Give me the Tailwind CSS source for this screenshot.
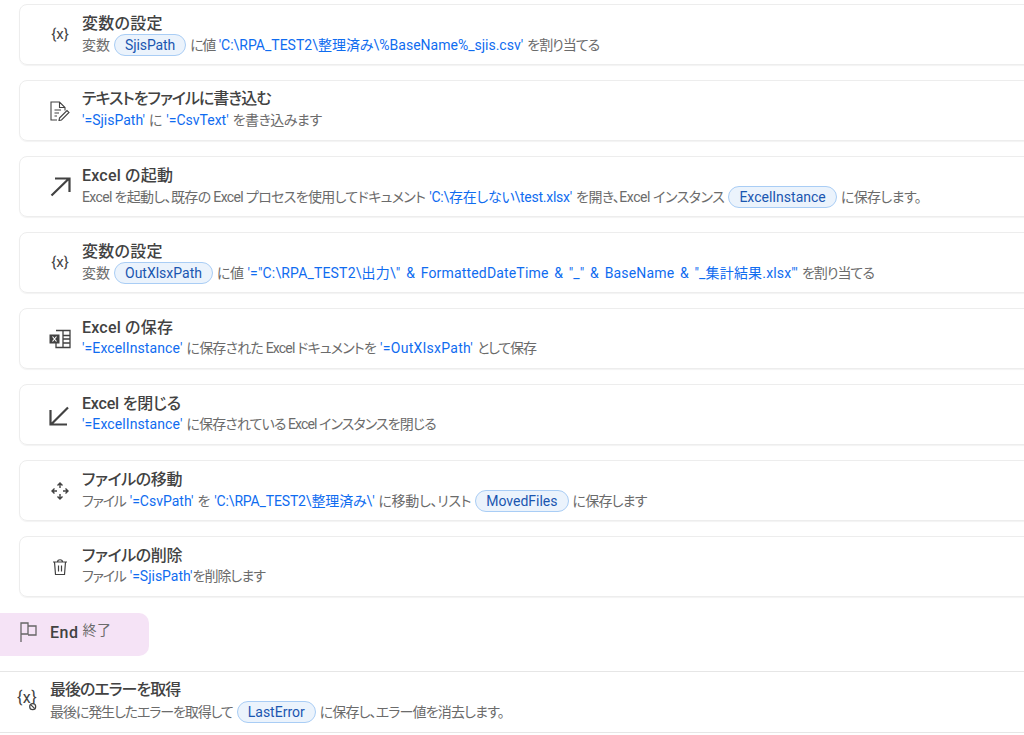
<!DOCTYPE html>
<html lang="ja">
<head>
  <meta charset="UTF-8" />
  <title>Flow</title>
  <script src="https://cdn.jsdelivr.net/npm/@tailwindcss/browser@4"></script>
</head>
<body class="bg-white w-[1024px] h-[735px] overflow-hidden font-['Roboto','Noto_Sans_CJK_JP',sans-serif] [font-feature-settings:'palt'] text-[14px] text-[#6b6b6b]">
  <div class="pt-[4px] pl-[19px] flex flex-col gap-[15px] -mr-[20px]">

    <div class="h-[61px] border border-[#ededed] rounded-[8px] flex items-center shadow-[0_1px_1px_#f3f3f3]">
      <div class="w-[62px] flex justify-center pl-[17px] -mt-[2px]">
        <svg class="w-[20px] h-[20px]" viewBox="0 0 20 20"><text x="10" y="15" text-anchor="middle" font-size="15" fill="#424242">{x}</text></svg>
      </div>
      <div class="-mt-[1px]">
        <div class="text-[16px] leading-[22px] font-medium text-[#424242] tracking-[0.3px] translate-y-[1px]">変数の設定</div>
        <div class="leading-[20px] flex items-center gap-[4px] whitespace-nowrap"><span>変数</span><span class="px-[10px] h-[22px] leading-[20px] rounded-full border border-[#a9cdf5] bg-[#ebf3fc] text-[#1a56b0] tracking-[-0.1px]">SjisPath</span><span class="tracking-[-1.5px]">に値</span><span class="text-[#0f6cf0]">'C:\RPA_TEST2\整理済み\%BaseName%_sjis.csv'</span><span class="tracking-[-1px]">を割り当てる</span></div>
      </div>
    </div>

    <div class="h-[61px] border border-[#ededed] rounded-[8px] flex items-center shadow-[0_1px_1px_#f3f3f3]">
      <div class="w-[62px] flex justify-center pl-[17px]">
        <svg class="w-[20px] h-[20px]" viewBox="0 0 20 20" fill="none" stroke="#424242" stroke-width="1.100"><path d="M7 19H1V1H9.500L15 6.500V9.500M9.500 1V6.500H15M4.500 9H11M4.500 12H9M4.500 15H7M9.500 17L17 9.500L19 11.500L11.500 19L9 19.500Z"/></svg>
      </div>
      <div class="-mt-[3px]">
        <div class="text-[16px] leading-[22px] font-medium text-[#424242] tracking-[-1px]">テキストをファイルに書き込む</div>
        <div class="leading-[20px] flex items-center gap-[4px] whitespace-nowrap"><span class="text-[#0f6cf0]">'=SjisPath'</span><span>に</span><span class="text-[#0f6cf0]">'=CsvText'</span><span class="tracking-[-0.5px]">を書き込みます</span></div>
      </div>
    </div>

    <div class="h-[61px] border border-[#ededed] rounded-[8px] flex items-center shadow-[0_1px_1px_#f3f3f3]">
      <div class="w-[62px] flex justify-center pl-[17px]">
        <svg class="w-[24px] h-[24px]" viewBox="0 0 24 24" fill="none" stroke="#424242" stroke-width="2.200"><path d="M3.500 20.500L21 3.500M7 3.500H21.500V17"/></svg>
      </div>
      <div class="-mt-[1px]">
        <div class="text-[16px] leading-[22px] font-medium text-[#424242] tracking-[0.2px] translate-y-[1px]">Excel の起動</div>
        <div class="leading-[20px] flex items-center gap-[4px] whitespace-nowrap"><span class="tracking-[-0.65px]">Excel を起動し、既存の Excel プロセスを使用してドキュメント</span><span class="text-[#0f6cf0] tracking-[-0.25px]">'C:\存在しない\test.xlsx'</span><span class="tracking-[-0.45px]">を開き、Excel インスタンス</span><span class="px-[10px] h-[22px] leading-[20px] rounded-full border border-[#a9cdf5] bg-[#ebf3fc] text-[#1a56b0]">ExcelInstance</span><span class="tracking-[-0.6px]">に保存します。</span></div>
      </div>
    </div>

    <div class="h-[61px] border border-[#ededed] rounded-[8px] flex items-center shadow-[0_1px_1px_#f3f3f3]">
      <div class="w-[62px] flex justify-center pl-[17px] -mt-[2px]">
        <svg class="w-[20px] h-[20px]" viewBox="0 0 20 20"><text x="10" y="15" text-anchor="middle" font-size="15" fill="#424242">{x}</text></svg>
      </div>
      <div class="-mt-[1px]">
        <div class="text-[16px] leading-[22px] font-medium text-[#424242] tracking-[0.3px] translate-y-[1px]">変数の設定</div>
        <div class="leading-[20px] flex items-center gap-[4px] whitespace-nowrap"><span>変数</span><span class="px-[10px] h-[22px] leading-[20px] rounded-full border border-[#a9cdf5] bg-[#ebf3fc] text-[#1a56b0]">OutXlsxPath</span><span class="tracking-[-0.5px]">に値</span><span class="text-[#0f6cf0] tracking-[0.17px] [word-spacing:2px]">'="C:\RPA_TEST2\出力\" &amp; FormattedDateTime &amp; "_" &amp; BaseName &amp; "_集計結果.xlsx"'</span><span class="tracking-[-1px]">を割り当てる</span></div>
      </div>
    </div>

    <div class="h-[61px] border border-[#ededed] rounded-[8px] flex items-center shadow-[0_1px_1px_#f3f3f3]">
      <div class="w-[62px] flex justify-center pl-[17px]">
        <svg class="w-[22px] h-[20px]" viewBox="0 0 22 20" fill="none" stroke="#424242" stroke-width="1.300"><path d="M7 1.500H21V18.500H7V14M14 1.500V18.500M14 6.500H21M14 10H21M14 14H21"/><rect x="0.500" y="5.500" width="10" height="9" fill="#424242" stroke="none"/><path d="M3.500 7.500L7.500 12.500M7.500 7.500L3.500 12.500" stroke="#fff" stroke-width="1.200"/></svg>
      </div>
      <div class="-mt-[3px]">
        <div class="text-[16px] leading-[22px] font-medium text-[#424242] tracking-[0.2px] translate-y-[1px]">Excel の保存</div>
        <div class="leading-[20px] flex items-center gap-[4px] whitespace-nowrap"><span class="text-[#0f6cf0] tracking-[0.1px]">'=ExcelInstance'</span><span class="tracking-[-0.8px]">に保存された Excel ドキュメントを</span><span class="text-[#0f6cf0] tracking-[0.3px]">'=OutXlsxPath'</span><span class="tracking-[-1.2px]">として保存</span></div>
      </div>
    </div>

    <div class="h-[61px] border border-[#ededed] rounded-[8px] flex items-center shadow-[0_1px_1px_#f3f3f3]">
      <div class="w-[62px] flex justify-center pl-[17px]">
        <svg class="w-[24px] h-[24px]" viewBox="0 0 24 24" fill="none" stroke="#424242" stroke-width="2.200"><path d="M20 4.500L3 21.500M2.500 7V21.500H19"/></svg>
      </div>
      <div class="-mt-[3px]">
        <div class="text-[16px] leading-[22px] font-medium text-[#424242] tracking-[-0.2px] translate-y-[1px]">Excel を閉じる</div>
        <div class="leading-[20px] flex items-center gap-[4px] whitespace-nowrap"><span class="text-[#0f6cf0] tracking-[0.1px]">'=ExcelInstance'</span><span class="tracking-[-0.9px]">に保存されている Excel インスタンスを閉じる</span></div>
      </div>
    </div>

    <div class="h-[61px] border border-[#ededed] rounded-[8px] flex items-center shadow-[0_1px_1px_#f3f3f3]">
      <div class="w-[62px] flex justify-center pl-[17px]">
        <svg class="w-[20px] h-[20px]" viewBox="0 0 20 20" fill="none" stroke="#424242" stroke-width="1.400"><path d="M10 7V2M7.500 4.500L10 2L12.500 4.500M10 13V18M7.500 15.500L10 18L12.500 15.500M7 10H2M4.500 7.500L2 10L4.500 12.500M13 10H18M15.500 7.500L18 10L15.500 12.500"/></svg>
      </div>
      <div class="-mt-[1px]">
        <div class="text-[16px] leading-[22px] font-medium text-[#424242] tracking-[-0.4px] translate-y-[1px]">ファイルの移動</div>
        <div class="leading-[20px] flex items-center gap-[4px] whitespace-nowrap"><span class="tracking-[-1.2px]">ファイル</span><span class="text-[#0f6cf0]">'=CsvPath'</span><span>を</span><span class="text-[#0f6cf0] tracking-[-0.15px]">'C:\RPA_TEST2\整理済み\'</span><span class="tracking-[-0.3px]">に移動し、リスト</span><span class="px-[10px] h-[22px] leading-[20px] rounded-full border border-[#a9cdf5] bg-[#ebf3fc] text-[#1a56b0]">MovedFiles</span><span class="tracking-[-0.8px]">に保存します</span></div>
      </div>
    </div>

    <div class="h-[61px] border border-[#ededed] rounded-[8px] flex items-center shadow-[0_1px_1px_#f3f3f3]">
      <div class="w-[62px] flex justify-center pl-[17px]">
        <svg class="w-[20px] h-[20px]" viewBox="0 0 20 20" fill="none" stroke="#424242" stroke-width="1.200"><path d="M3 5H17M7.500 5C7.500 2 12.500 2 12.500 5M4.500 5L5.500 17.500H14.500L15.500 5M8.500 8.500V14.500M11.500 8.500V14.500"/></svg>
      </div>
      <div class="-mt-[3px]">
        <div class="text-[16px] leading-[22px] font-medium text-[#424242] tracking-[-0.4px] translate-y-[1px]">ファイルの削除</div>
        <div class="leading-[20px] flex items-center gap-[4px] whitespace-nowrap"><span class="tracking-[-1.2px]">ファイル</span><span class="text-[#0f6cf0]">'=SjisPath'</span><span class="-ml-[4px] tracking-[-1px]">を削除します</span></div>
      </div>
    </div>
  </div>

  <div class="mt-[16px] w-[149px] h-[43px] bg-[#f5e3f6] rounded-r-[10px] flex items-center pl-[20px] gap-[13px]">
    <svg class="w-[17px] h-[20px] -mt-[5px]" viewBox="0 0 17 20" fill="none" stroke="#666" stroke-width="1.300"><path d="M1 20V1H8V12H1M8 4H16V13H8"/></svg>
    <span class="text-[16px] font-medium text-[#424242] tracking-[0.5px] -mt-[3px]">End</span>
    <span class="text-[14px] -ml-[9px] -mt-[8px] tracking-[0.5px]">終了</span>
  </div>

  <div class="mt-[15px] h-[62px] border-y border-[#e6e6e6] flex items-center pl-[17px]">
    <svg class="w-[22px] h-[26px] mr-[11px] -mt-[3px]" viewBox="0 0 22 26" fill="none" stroke="#424242" stroke-width="1.200"><text x="10" y="15" text-anchor="middle" font-size="16" letter-spacing="0.5" fill="#424242" stroke="none">{x}</text><circle cx="15.700" cy="18.700" r="3" fill="#fff"/><path d="M13.700 16.700L17.700 20.700"/></svg>
    <div class="-mt-[3px]">
      <div class="text-[16px] leading-[22px] font-medium text-[#424242] tracking-[-1px]">最後のエラーを取得</div>
      <div class="leading-[20px] flex items-center gap-[4px] whitespace-nowrap"><span class="tracking-[-1.1px]">最後に発生したエラーを取得して</span><span class="px-[10px] h-[22px] leading-[20px] rounded-full border border-[#a9cdf5] bg-[#ebf3fc] text-[#1a56b0]">LastError</span><span class="tracking-[-0.85px]">に保存し、エラー値を消去します。</span></div>
    </div>
  </div>
</body>
</html>
